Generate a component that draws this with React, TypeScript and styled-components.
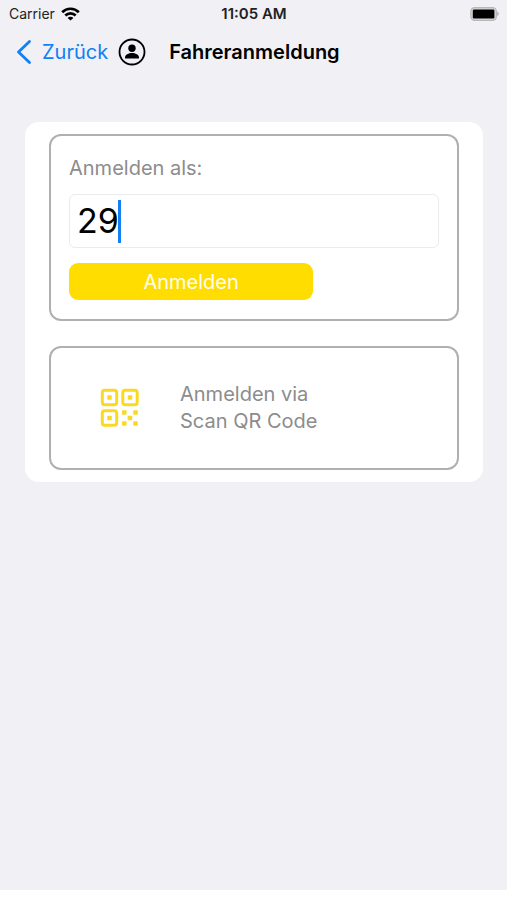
import React, { useState } from "react";
import styled, { createGlobalStyle } from "styled-components";

const GlobalStyle = createGlobalStyle`
  *, *::before, *::after { box-sizing: border-box; }
  body {
    margin: 0;
    background: #ffffff;
    color: #000000;
    font-family: Inter, "Liberation Sans", sans-serif;
  }
  button, input { font: inherit; color: inherit; }
`;

const Screen = styled.div`
  min-height: calc(100vh - 10px);
  padding-bottom: 24px;
  background: #f0f0f5;
`;

const StatusBar = styled.div`
  display: grid;
  grid-template-columns: 1fr auto 1fr;
  align-items: center;
  height: 28px;
  padding: 0 8px 0 9px;
  font-size: 14px;
  line-height: 20px;
`;

const Carrier = styled.div`
  display: flex;
  align-items: center;
  gap: 6px;
  color: #222222;
`;

const Clock = styled.time`
  font-size: 15px;
  font-weight: 600;
  color: #222222;
`;

const BatterySlot = styled.div`
  display: flex;
  justify-content: flex-end;
`;

const NavBar = styled.header`
  display: flex;
  align-items: center;
  height: 48px;
  padding: 0 16px;
`;

const BackLink = styled.a`
  display: flex;
  align-items: center;
  gap: 10px;
  color: #0f80f5;
  font-size: 20px;
  line-height: 28px;
  text-decoration: none;
`;

const ProfileButton = styled.button`
  display: flex;
  margin: 0 23px 0 10px;
  padding: 0;
  border: 0;
  background: none;
`;

const Title = styled.h1`
  margin: 0;
  font-size: 20px;
  line-height: 28px;
  font-weight: 600;
`;

const Card = styled.main`
  display: flex;
  flex-direction: column;
  gap: 25px;
  margin: 46px 24px 0 25px;
  padding: 12px 24px;
  border-radius: 14px;
  background: #ffffff;
`;

const LoginForm = styled.form`
  display: flex;
  flex-direction: column;
  align-items: flex-start;
  padding: 18px 18px 19px;
  border: 2px solid #b0b0b0;
  border-radius: 12px;
`;

const FieldLabel = styled.label`
  color: #8c8c8c;
  font-size: 20px;
  line-height: 28px;
`;

const Field = styled.label`
  display: flex;
  align-items: center;
  width: 100%;
  height: 54px;
  margin: 12px 0 15px;
  padding: 0 7px;
  border: 1px solid #ebebeb;
  border-radius: 6px;
  background: #ffffff;
  cursor: text;
`;

const DriverInput = styled.input`
  field-sizing: content;
  min-width: 1px;
  max-width: 100%;
  padding: 0;
  border: 0;
  outline: 0;
  background: none;
  font-size: 34px;
  line-height: 44px;
  caret-color: transparent;
`;

const Caret = styled.span`
  width: 3px;
  height: 43px;
  margin-left: -1px;
  background: #157ef0;
`;

const SubmitButton = styled.button`
  width: 66%;
  height: 37px;
  padding: 0;
  border: 0;
  border-radius: 9px;
  background: #ffdd00;
  color: #fffdf0;
  font-size: 20px;
  line-height: 28px;
`;

const ScanButton = styled.button`
  display: flex;
  align-items: center;
  gap: 40px;
  min-height: 124px;
  padding: 16px 49px;
  border: 2px solid #b0b0b0;
  border-radius: 12px;
  background: #ffffff;
  color: #8c8c8c;
  font-size: 20px;
  line-height: 27px;
  text-align: left;
`;

const ScanLine = styled.span`
  display: block;
`;

function WifiIcon() {
  return (
    <svg width="19" height="14" viewBox="0 0 19 14" aria-hidden="true">
      <g fill="none" stroke="#000" strokeWidth="2.7">
        <path d="M1.2 5.2C5.8 0.6 13.2 0.6 17.8 5.2" />
        <path d="M4.3 8.5C7.2 5.6 11.8 5.6 14.7 8.5" />
      </g>
      <path d="M9.5 13.6L6.6 10.9C8.2 9.4 10.8 9.4 12.4 10.9Z" />
    </svg>
  );
}

function BatteryIcon() {
  return (
    <svg width="30" height="15" viewBox="0 0 30 15" aria-label="Akku voll" role="img">
      <rect x="1.8" y="0.6" width="25.6" height="12.8" rx="4" fill="#d6d6d8" stroke="#b8b8ba" strokeWidth="1.2" />
      <rect x="3.8" y="2.4" width="21.6" height="9.2" rx="1.4" />
      <path d="M28.2 4.6C30.4 5.4 30.4 8.2 28.2 9Z" fill="#b4b4b6" />
    </svg>
  );
}

function ChevronIcon() {
  return (
    <svg width="16" height="26" viewBox="0 0 16 26" fill="none" stroke="currentColor" strokeWidth="2.8" strokeLinecap="round" strokeLinejoin="round" aria-hidden="true">
      <path d="M13.5 2.5L2.5 13L13.5 23.5" />
    </svg>
  );
}

function PersonIcon() {
  return (
    <svg width="28" height="28" viewBox="0 0 28 28" aria-hidden="true">
      <circle cx="14" cy="14" r="12.5" fill="none" stroke="#000" strokeWidth="1.8" />
      <circle cx="14" cy="10.2" r="3.7" />
      <path d="M7 20.4V19.4C7 16.6 10.6 15 14 15C17.4 15 21 16.6 21 19.4V20.4Z" />
    </svg>
  );
}

function QrIcon() {
  return (
    <svg width="40" height="40" viewBox="0 0 40 40" fill="#fada20" aria-hidden="true">
      <g fill="none" stroke="#fada20" strokeWidth="3">
        <rect x="2.3" y="2.3" width="14.4" height="14.4" rx="2.4" />
        <rect x="22.8" y="2.3" width="14.4" height="14.4" rx="2.4" />
        <rect x="2.3" y="22.8" width="14.4" height="14.4" rx="2.4" />
      </g>
      <rect x="7.2" y="7.2" width="4.6" height="4.6" rx="0.8" />
      <rect x="27.7" y="7.2" width="4.6" height="4.6" rx="0.8" />
      <rect x="7.2" y="27.7" width="4.6" height="4.6" rx="0.8" />
      <rect x="22" y="22.2" width="4.6" height="4.6" rx="0.8" />
      <rect x="33.2" y="22.2" width="4.6" height="4.6" rx="0.8" />
      <rect x="27.6" y="27.7" width="4.6" height="4.6" rx="0.8" />
      <rect x="22" y="33.2" width="4.6" height="4.6" rx="0.8" />
      <rect x="33.2" y="33.2" width="4.6" height="4.6" rx="0.8" />
    </svg>
  );
}

export default function App() {
  const [driver, setDriver] = useState("29");

  return (
    <>
      <GlobalStyle />
      <Screen>
        <StatusBar>
          <Carrier>
            Carrier <WifiIcon />
          </Carrier>
          <Clock>11:05 AM</Clock>
          <BatterySlot>
            <BatteryIcon />
          </BatterySlot>
        </StatusBar>
        <NavBar>
          <BackLink href="#">
            <ChevronIcon />
            Zurück
          </BackLink>
          <ProfileButton type="button" aria-label="Profil">
            <PersonIcon />
          </ProfileButton>
          <Title>Fahreranmeldung</Title>
        </NavBar>
        <Card>
          <LoginForm onSubmit={(event) => event.preventDefault()}>
            <FieldLabel htmlFor="driver">Anmelden als:</FieldLabel>
            <Field htmlFor="driver">
              <DriverInput
                id="driver"
                inputMode="numeric"
                autoComplete="off"
                value={driver}
                onChange={(event) => setDriver(event.target.value)}
              />
              <Caret aria-hidden="true" />
            </Field>
            <SubmitButton type="submit">Anmelden</SubmitButton>
          </LoginForm>
          <ScanButton type="button">
            <QrIcon />
            <span>
              <ScanLine>Anmelden via</ScanLine>
              <ScanLine>Scan QR Code</ScanLine>
            </span>
          </ScanButton>
        </Card>
      </Screen>
    </>
  );
}
